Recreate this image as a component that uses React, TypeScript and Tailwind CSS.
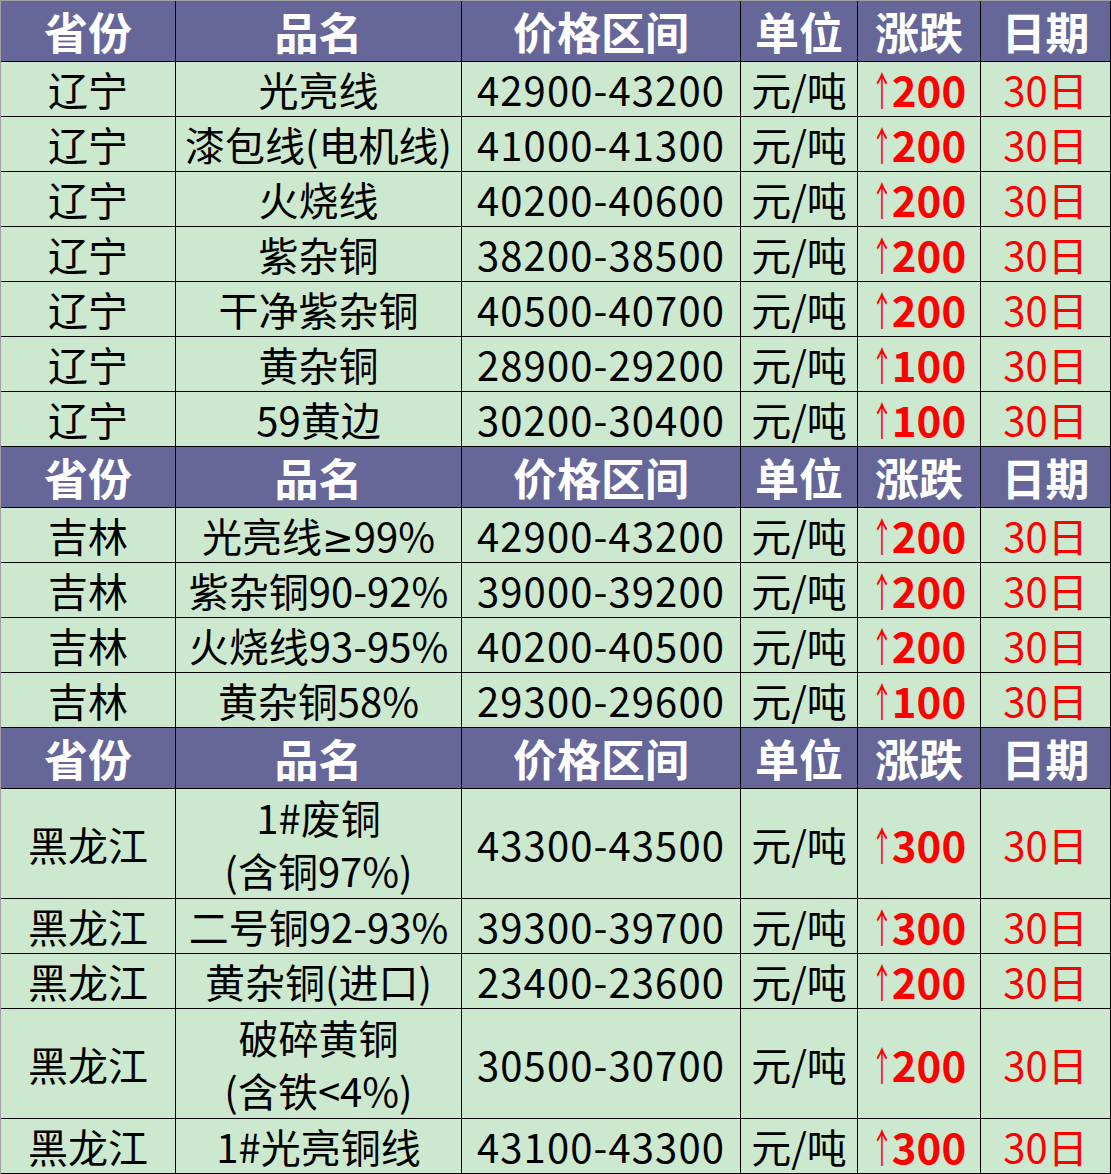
const HEAD = ["省份", "品名", "价格区间", "单位", "涨跌", "日期"];

type Row = { p: string; n: string[]; price: string; chg: string; tall?: boolean };

const groups: Row[][] = [
  [
    { p: "辽宁", n: ["光亮线"], price: "42900-43200", chg: "200" },
    { p: "辽宁", n: ["漆包线(电机线)"], price: "41000-41300", chg: "200" },
    { p: "辽宁", n: ["火烧线"], price: "40200-40600", chg: "200" },
    { p: "辽宁", n: ["紫杂铜"], price: "38200-38500", chg: "200" },
    { p: "辽宁", n: ["干净紫杂铜"], price: "40500-40700", chg: "200" },
    { p: "辽宁", n: ["黄杂铜"], price: "28900-29200", chg: "100" },
    { p: "辽宁", n: ["59黄边"], price: "30200-30400", chg: "100" },
  ],
  [
    { p: "吉林", n: ["光亮线≥99%"], price: "42900-43200", chg: "200" },
    { p: "吉林", n: ["紫杂铜90-92%"], price: "39000-39200", chg: "200" },
    { p: "吉林", n: ["火烧线93-95%"], price: "40200-40500", chg: "200" },
    { p: "吉林", n: ["黄杂铜58%"], price: "29300-29600", chg: "100" },
  ],
  [
    { p: "黑龙江", n: ["1#废铜", "(含铜97%)"], price: "43300-43500", chg: "300", tall: true },
    { p: "黑龙江", n: ["二号铜92-93%"], price: "39300-39700", chg: "300" },
    { p: "黑龙江", n: ["黄杂铜(进口)"], price: "23400-23600", chg: "200" },
    { p: "黑龙江", n: ["破碎黄铜", "(含铁<4%)"], price: "30500-30700", chg: "200", tall: true },
    { p: "黑龙江", n: ["1#光亮铜线"], price: "43100-43300", chg: "300" },
  ],
];

const cols = "grid grid-cols-[175px_286px_279px_117px_123px_130px] grid-rows-[minmax(0,1fr)] border-b border-black";
const cell = "flex flex-col items-center justify-center border-r border-black bg-[#cce8cf]";

// ≥ in a Latin font so it has the straight bar
function Name({ t }: { t: string }) {
  const parts = t.split("≥");
  if (parts.length === 1) return <span className="block h-[53px] leading-[53px]">{t}</span>;
  return (
    <span className="block h-[53px] leading-[53px]">
      {parts[0]}
      <span className="font-['DejaVu_Sans'] text-[38px]">≥</span>
      {parts[1]}
    </span>
  );
}

function Header() {
  return (
    <div className={`${cols} h-[61px] shrink-0`}>
      {HEAD.map((h) => (
        <div key={h} className="flex items-center justify-center border-r border-black bg-[#666699] text-[44px] font-bold text-white leading-[60px]">
          {h}
        </div>
      ))}
    </div>
  );
}

function DataRow({ r }: { r: Row }) {
  return (
    <div className={`${cols} ${r.tall ? "h-[110px]" : "h-[55px]"} shrink-0`}>
      <div className={`${cell} text-black`}>{r.p}</div>
      <div className={`${cell} text-black`}>
        {r.n.map((t) => (
          <Name key={t} t={t} />
        ))}
      </div>
      <div className={`${cell} text-black tracking-[1.1px]`}>{r.price}</div>
      <div className={`${cell} text-black`}>元/吨</div>
      <div className="flex items-center justify-center border-r border-black bg-[#cce8cf] text-[#ff0000]">
        <span className="inline-flex w-[20px] justify-center">
          <span className="inline-block scale-x-[0.55] font-normal text-[40px]">↑</span>
        </span>
        <span className="font-bold text-[42px]">{r.chg}</span>
      </div>
      <div className={`${cell} text-[#ff0000]`}>30日</div>
    </div>
  );
}

export default function App() {
  return (
    <div
      className="flex w-[1111px] h-[1174px] flex-col border-t border-l border-[#a0a0a0] bg-white text-[40px] leading-[50px]"
      style={{ fontFamily: '"Noto Sans CJK SC", "Noto Sans", sans-serif' }}
    >
      {groups.map((g, i) => (
        <div key={i} className="flex flex-col">
          <Header />
          {g.map((r, j) => (
            <DataRow key={j} r={r} />
          ))}
        </div>
      ))}
    </div>
  );
}
